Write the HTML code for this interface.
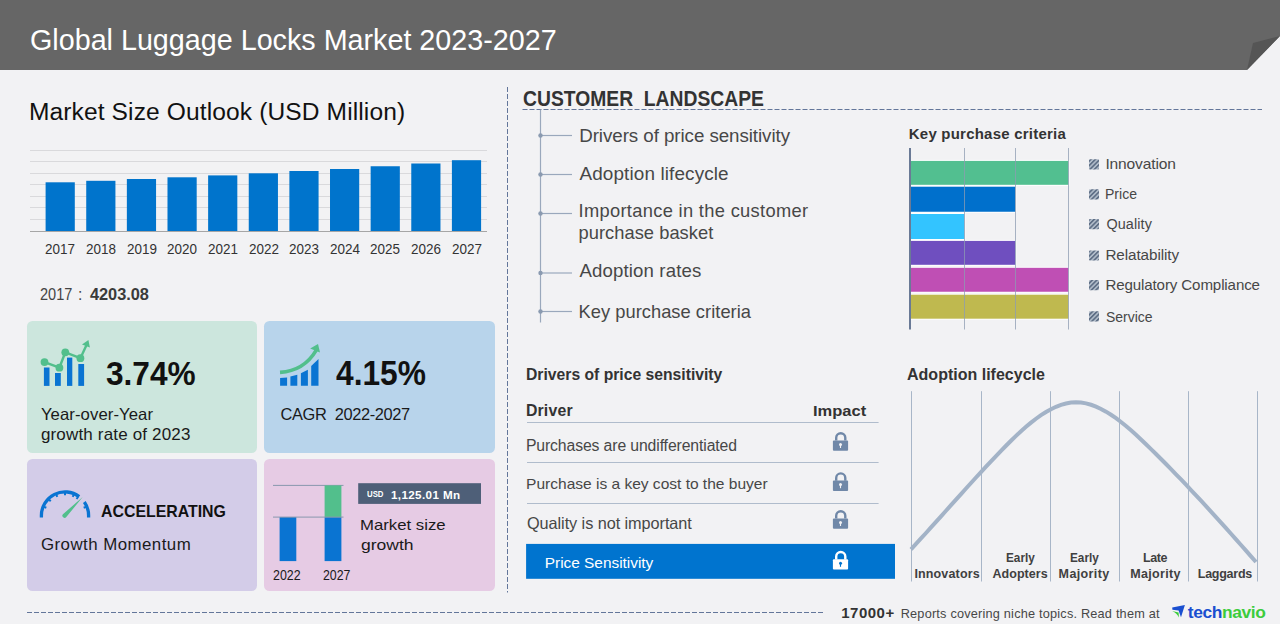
<!DOCTYPE html>
<html><head><meta charset="utf-8">
<style>
*{margin:0;padding:0;box-sizing:border-box}
html,body{width:1280px;height:624px;overflow:hidden;background:#f2f2f4;font-family:"Liberation Sans",sans-serif;color:#404040}
.a{position:absolute;white-space:nowrap;line-height:1}
svg.s{position:absolute;left:0;top:0}
.card{position:absolute;border-radius:6px}
</style></head><body>
<svg class="s" width="1280" height="624" viewBox="0 0 1280 624">
<polygon points="0,0 1280,0 1280,36 1247,70 0,70" fill="#666666"/>
<polygon points="1247,70 1253,43 1280,36" fill="#555555"/>
<g stroke="#d9d9dc" stroke-width="1"><line x1="30" x2="487" y1="150.5" y2="150.5"/><line x1="30" x2="487" y1="161.5" y2="161.5"/><line x1="30" x2="487" y1="173.5" y2="173.5"/><line x1="30" x2="487" y1="184.5" y2="184.5"/><line x1="30" x2="487" y1="196.5" y2="196.5"/><line x1="30" x2="487" y1="207.5" y2="207.5"/><line x1="30" x2="487" y1="219.5" y2="219.5"/></g>
<line x1="30" x2="487" y1="231.5" y2="231.5" stroke="#a6a6a6"/>
<g fill="#0074cc"><rect x="45.60" y="182.3" width="29.2" height="48.70"/><rect x="86.23" y="180.8" width="29.2" height="50.20"/><rect x="126.86" y="179" width="29.2" height="52.00"/><rect x="167.49" y="177.3" width="29.2" height="53.70"/><rect x="208.12" y="175.4" width="29.2" height="55.60"/><rect x="248.75" y="173.3" width="29.2" height="57.70"/><rect x="289.38" y="171" width="29.2" height="60.00"/><rect x="330.01" y="169" width="29.2" height="62.00"/><rect x="370.64" y="166.25" width="29.2" height="64.75"/><rect x="411.27" y="163.5" width="29.2" height="67.50"/><rect x="451.90" y="160.2" width="29.2" height="70.80"/></g>
<rect x="27" y="321" width="230" height="132" rx="5.5" fill="#cce6dd"/>
<rect x="264" y="321" width="231" height="132" rx="5.5" fill="#b8d4eb"/>
<rect x="27" y="459" width="230" height="132" rx="5.5" fill="#d3cce8"/>
<rect x="264" y="459" width="231" height="132" rx="5.5" fill="#e6cbe4"/>
<rect x="43.9" y="367.5" width="5.60" height="18.40" fill="#0a74d2"/>
<rect x="55" y="373" width="5.80" height="12.90" fill="#0a74d2"/>
<rect x="67" y="357.6" width="5.30" height="28.30" fill="#0a74d2"/>
<rect x="78.3" y="364" width="5.80" height="21.90" fill="#0a74d2"/>
<polyline points="44.5,362.1 59.4,367.7 65.3,352.3 80.4,358.2 86.3,345.5" stroke="#52bf8c" stroke-width="2.4" fill="none" stroke-linejoin="round"/>
<circle cx="44.5" cy="362.1" r="3.9" fill="#52bf8c"/>
<circle cx="59.4" cy="367.7" r="3.9" fill="#52bf8c"/>
<circle cx="65.3" cy="352.3" r="3.9" fill="#52bf8c"/>
<circle cx="80.4" cy="358.2" r="3.9" fill="#52bf8c"/>
<polygon points="88.4,340 89.9,347.6 82,344.6" fill="#52bf8c"/>
<polygon points="280.1,377.9 287.1,377.4 287.1,385.8 280.1,385.8" fill="#0a74d2"/>
<polygon points="290.4,376.6 297.3,374.8 297.3,385.8 290.4,385.8" fill="#0a74d2"/>
<polygon points="300.9,373.25 307.9,369.7 307.9,385.8 300.9,385.8" fill="#0a74d2"/>
<polygon points="311.2,366 318.5,358.9 318.5,385.8 311.2,385.8" fill="#0a74d2"/>
<path d="M280,372.4 Q304,371 316.3,350.2" stroke="#52bf8c" stroke-width="3.6" fill="none"/>
<polygon points="318,343.9 320,352.6 310.2,348.6" fill="#52bf8c"/>
<path d="M41.40,517.50 L41.40,515.5 A23.6,23.6 0 0 1 79.20,496.65" stroke="#0a74d2" stroke-width="3.3" fill="none"/>
<path d="M84.33,501.96 A23.6,23.6 0 0 1 88.60,515.5 L88.60,517.5" stroke="#0a74d2" stroke-width="3.3" fill="none"/>
<line x1="44.12" y1="506.85" x2="46.34" y2="507.77" stroke="#0a74d2" stroke-width="2"/>
<line x1="49.02" y1="499.52" x2="50.72" y2="501.22" stroke="#0a74d2" stroke-width="2"/>
<line x1="56.35" y1="494.62" x2="57.27" y2="496.84" stroke="#0a74d2" stroke-width="2"/>
<line x1="65.00" y1="492.90" x2="65.00" y2="495.30" stroke="#0a74d2" stroke-width="2"/>
<line x1="73.65" y1="494.62" x2="72.73" y2="496.84" stroke="#0a74d2" stroke-width="2"/>
<line x1="77.96" y1="496.99" x2="76.59" y2="498.95" stroke="#0a74d2" stroke-width="2"/>
<line x1="85.88" y1="506.85" x2="83.66" y2="507.77" stroke="#0a74d2" stroke-width="2"/>
<path d="M82.7,497.1 L66.3,517 A2,2 0 0 1 62.9,514.2 Z" fill="#52bf8c"/>
<line x1="273" x2="343.5" y1="485.4" y2="485.4" stroke="#8898ae" stroke-width="1"/>
<rect x="279.6" y="517.1" width="16.7" height="44" fill="#0a74d2"/>
<rect x="324.6" y="517.1" width="16.8" height="44" fill="#0a74d2"/>
<rect x="324.6" y="485.4" width="16.8" height="31.7" fill="#52bf8c"/>
<line x1="273" x2="343.5" y1="517.1" y2="517.1" stroke="#8898ae" stroke-width="1"/>
<rect x="358.2" y="483.2" width="122.8" height="20.7" fill="#4e5f78"/>
<g stroke="#63769a" stroke-width="1" stroke-dasharray="5,2">
<line x1="507.5" y1="87" x2="507.5" y2="592.5"/>
<line x1="522.5" y1="109.5" x2="1262" y2="109.5"/>
<line x1="27" y1="612.5" x2="823" y2="612.5"/>
</g>
<g stroke="#9aa8bc" stroke-width="1.2">
<line x1="540.5" y1="109.5" x2="540.5" y2="322.5"/>
<line x1="540.5" y1="135.5" x2="572" y2="135.5"/>
<line x1="540.5" y1="174.5" x2="572" y2="174.5"/>
<line x1="540.5" y1="213.5" x2="572" y2="213.5"/>
<line x1="540.5" y1="273" x2="572" y2="273"/>
<line x1="540.5" y1="311.5" x2="572" y2="311.5"/>
</g>
<circle cx="540.5" cy="135.5" r="2.2" fill="#8a9ab0"/>
<circle cx="540.5" cy="174.5" r="2.2" fill="#8a9ab0"/>
<circle cx="540.5" cy="213.5" r="2.2" fill="#8a9ab0"/>
<circle cx="540.5" cy="273" r="2.2" fill="#8a9ab0"/>
<circle cx="540.5" cy="311.5" r="2.2" fill="#8a9ab0"/>
<rect x="910" y="160.9" width="158.4" height="23.90" fill="#52bf90" stroke="#fff" stroke-width="2" paint-order="stroke"/>
<rect x="910" y="186.7" width="105.3" height="25.05" fill="#0070cc" stroke="#fff" stroke-width="2" paint-order="stroke"/>
<rect x="910" y="214" width="54.4" height="25.00" fill="#33c4ff" stroke="#fff" stroke-width="2" paint-order="stroke"/>
<rect x="910" y="240.9" width="105.3" height="23.90" fill="#6f4fbf" stroke="#fff" stroke-width="2" paint-order="stroke"/>
<rect x="910" y="267.8" width="158.4" height="23.95" fill="#bf4fb4" stroke="#fff" stroke-width="2" paint-order="stroke"/>
<rect x="910" y="294.7" width="158.4" height="24.00" fill="#bfb94f" stroke="#fff" stroke-width="2" paint-order="stroke"/>
<g stroke="#8d9cb2" stroke-width="1" opacity="0.75"><line x1="964.5" y1="148" x2="964.5" y2="329.5"/><line x1="1015.5" y1="148" x2="1015.5" y2="329.5"/><line x1="1068.5" y1="148" x2="1068.5" y2="329.5"/></g>
<line x1="910" y1="148" x2="910" y2="329.5" stroke="#6a7a96" stroke-width="2"/>
<defs><pattern id="hatch" width="3.2" height="3.2" patternUnits="userSpaceOnUse" patternTransform="rotate(45)"><rect width="3.2" height="3.2" fill="#b4bfcc"/><rect width="1.7" height="3.2" fill="#5f6f86"/></pattern></defs>
<rect x="1089" y="159.2" width="10" height="10.2" rx="1" fill="url(#hatch)"/>
<rect x="1089" y="189.3" width="10" height="10.2" rx="1" fill="url(#hatch)"/>
<rect x="1089" y="219" width="10" height="10.2" rx="1" fill="url(#hatch)"/>
<rect x="1089" y="250.4" width="10" height="10.2" rx="1" fill="url(#hatch)"/>
<rect x="1089" y="280" width="10" height="10.2" rx="1" fill="url(#hatch)"/>
<rect x="1089" y="311.2" width="10" height="10.2" rx="1" fill="url(#hatch)"/>
<g stroke="#b0bccc" stroke-width="1">
<line x1="527" y1="422.5" x2="878.6" y2="422.5"/>
<line x1="527" y1="462.5" x2="878.6" y2="462.5"/>
<line x1="527" y1="503.5" x2="878.6" y2="503.5"/>
</g>
<rect x="526.1" y="543.9" width="368.9" height="34.9" fill="#0074cf"/>
<g transform="translate(832.9,432.0)"><path d="M3.3,8.6 V5.75 A4.55,4.55 0 0 1 12.4,5.75 V8.6" stroke="#7088a8" stroke-width="2.4" fill="none"/><rect x="0" y="8.4" width="15.2" height="10.3" rx="1" fill="#7088a8"/><circle cx="7.6" cy="12.4" r="1.5" fill="#f2f2f4"/><rect x="7.05" y="12.4" width="1.1" height="3.6" fill="#f2f2f4"/></g>
<g transform="translate(832.9,472.2)"><path d="M3.3,8.6 V5.75 A4.55,4.55 0 0 1 12.4,5.75 V8.6" stroke="#7088a8" stroke-width="2.4" fill="none"/><rect x="0" y="8.4" width="15.2" height="10.3" rx="1" fill="#7088a8"/><circle cx="7.6" cy="12.4" r="1.5" fill="#f2f2f4"/><rect x="7.05" y="12.4" width="1.1" height="3.6" fill="#f2f2f4"/></g>
<g transform="translate(832.9,510.00000000000006)"><path d="M3.3,8.6 V5.75 A4.55,4.55 0 0 1 12.4,5.75 V8.6" stroke="#7088a8" stroke-width="2.4" fill="none"/><rect x="0" y="8.4" width="15.2" height="10.3" rx="1" fill="#7088a8"/><circle cx="7.6" cy="12.4" r="1.5" fill="#f2f2f4"/><rect x="7.05" y="12.4" width="1.1" height="3.6" fill="#f2f2f4"/></g>
<g transform="translate(832.9,550.8)"><path d="M3.3,8.6 V5.75 A4.55,4.55 0 0 1 12.4,5.75 V8.6" stroke="#ffffff" stroke-width="2.4" fill="none"/><rect x="0" y="8.4" width="15.2" height="10.3" rx="1" fill="#ffffff"/><circle cx="7.6" cy="12.4" r="1.5" fill="#0074cf"/><rect x="7.05" y="12.4" width="1.1" height="3.6" fill="#0074cf"/></g>
<g stroke="#a8b6c8" stroke-width="1"><line x1="911.5" y1="391.2" x2="911.5" y2="581.5"/><line x1="981.5" y1="391.2" x2="981.5" y2="581.5"/><line x1="1050.5" y1="391.2" x2="1050.5" y2="581.5"/><line x1="1119.5" y1="391.2" x2="1119.5" y2="581.5"/><line x1="1188.5" y1="391.2" x2="1188.5" y2="581.5"/><line x1="1257.5" y1="391.2" x2="1257.5" y2="581.5"/></g>
<polyline points="911.0,549.30 916.0,543.91 921.0,538.47 926.0,532.98 931.0,527.46 936.0,521.92 941.0,516.35 946.0,510.78 951.0,505.20 956.0,499.62 961.0,494.06 966.0,488.51 971.0,482.99 976.0,477.51 981.0,472.06 986.0,466.67 991.0,461.33 996.0,456.05 1001.0,450.85 1006.0,445.73 1011.0,440.74 1016.0,435.89 1021.0,431.23 1026.0,426.80 1031.0,422.62 1036.0,418.74 1041.0,415.18 1046.0,411.98 1051.0,409.17 1056.0,406.80 1061.0,404.88 1066.0,403.47 1071.0,402.58 1076.0,402.27 1081.0,402.54 1086.0,403.38 1091.0,404.75 1096.0,406.60 1101.0,408.92 1106.0,411.65 1111.0,414.76 1116.0,418.22 1121.0,421.99 1126.0,426.04 1131.0,430.32 1136.0,434.80 1141.0,439.44 1146.0,444.21 1151.0,449.07 1156.0,454.00 1161.0,458.98 1166.0,464.03 1171.0,469.12 1176.0,474.27 1181.0,479.47 1186.0,484.72 1191.0,490.01 1196.0,495.35 1201.0,500.72 1206.0,506.14 1211.0,511.60 1216.0,517.09 1221.0,522.61 1226.0,528.17 1231.0,533.75 1236.0,539.36 1241.0,545.00 1246.0,550.65 1251.0,556.33 1256.0,562.03" stroke="#a3b3c7" stroke-width="4" fill="none"/>
<polygon points="1172.2,607.6 1184.9,605 1181,617.3 1178.6,610.6 1172.4,609.8" fill="#1a4fd0"/>
<path d="M1172.2,611 L1178.6,612.4 L1178.9,617.6 Q1177,613.3 1172.2,611 Z" fill="#3ccc3c"/>
</svg>
<div class="a" style="left:1187.8px;top:603.9px;font-size:17.4px;font-weight:bold;color:#1a4fd0;letter-spacing:-0.4px">tech<span style="color:#3ccc3c">navio</span></div>
<div class="a t" style="left:29.53px;top:25.20px;font-size:29.65px;color:#fff;transform:scaleX(0.9684);transform-origin:0 0">Global Luggage Locks Market 2023-2027</div>
<div class="a t" style="left:28.90px;top:100.01px;font-size:24.56px;color:#111;letter-spacing:0.121px">Market Size Outlook (USD Million)</div>
<div class="a t" style="left:45.35px;top:242.01px;font-size:14.83px;color:#333;transform:scaleX(0.9079);transform-origin:0 0">2017</div>
<div class="a t" style="left:85.98px;top:242.01px;font-size:14.83px;color:#333;transform:scaleX(0.9079);transform-origin:0 0">2018</div>
<div class="a t" style="left:126.61px;top:242.01px;font-size:14.83px;color:#333;transform:scaleX(0.9079);transform-origin:0 0">2019</div>
<div class="a t" style="left:167.24px;top:242.01px;font-size:14.83px;color:#333;transform:scaleX(0.9079);transform-origin:0 0">2020</div>
<div class="a t" style="left:207.87px;top:242.01px;font-size:14.83px;color:#333;transform:scaleX(0.9079);transform-origin:0 0">2021</div>
<div class="a t" style="left:248.50px;top:242.01px;font-size:14.83px;color:#333;transform:scaleX(0.9079);transform-origin:0 0">2022</div>
<div class="a t" style="left:289.13px;top:242.01px;font-size:14.83px;color:#333;transform:scaleX(0.9079);transform-origin:0 0">2023</div>
<div class="a t" style="left:329.76px;top:242.01px;font-size:14.83px;color:#333;transform:scaleX(0.9079);transform-origin:0 0">2024</div>
<div class="a t" style="left:370.39px;top:242.01px;font-size:14.83px;color:#333;transform:scaleX(0.9079);transform-origin:0 0">2025</div>
<div class="a t" style="left:411.02px;top:242.01px;font-size:14.83px;color:#333;transform:scaleX(0.9079);transform-origin:0 0">2026</div>
<div class="a t" style="left:451.65px;top:242.01px;font-size:14.83px;color:#333;transform:scaleX(0.9079);transform-origin:0 0">2027</div>
<div class="a t" style="left:40.25px;top:286.01px;font-size:16.35px;color:#444;transform:scaleX(0.8892);transform-origin:0 0">2017</div>
<div class="a t" style="left:78.00px;top:287.01px;font-size:15.60px;color:#444">:</div>
<div class="a t" style="left:90.00px;top:286.01px;font-size:16.35px;color:#3a3a3a;font-weight:bold;letter-spacing:-0.031px">4203.08</div>
<div class="a t" style="left:522.50px;top:88.81px;font-size:21.37px;color:#333;font-weight:bold;transform:scaleX(0.9036);transform-origin:0 0">CUSTOMER  LANDSCAPE</div>
<div class="a t" style="left:579.20px;top:126.90px;font-size:18.75px;color:#474747;letter-spacing:-0.062px">Drivers of price sensitivity</div>
<div class="a t" style="left:579.50px;top:164.81px;font-size:18.90px;color:#474747;letter-spacing:0.124px">Adoption lifecycle</div>
<div class="a t" style="left:578.50px;top:202.01px;font-size:18.31px;color:#474747;letter-spacing:0.316px">Importance in the customer</div>
<div class="a t" style="left:578.50px;top:224.32px;font-size:18.31px;color:#474747;letter-spacing:0.037px">purchase basket</div>
<div class="a t" style="left:579.50px;top:261.90px;font-size:18.60px;color:#474747;letter-spacing:0.145px">Adoption rates</div>
<div class="a t" style="left:578.50px;top:303.41px;font-size:18.31px;color:#474747;letter-spacing:0.031px">Key purchase criteria</div>
<div class="a t" style="left:908.80px;top:127.40px;font-size:14.97px;color:#333;font-weight:bold;letter-spacing:0.233px">Key purchase criteria</div>
<div class="a t" style="left:1105.40px;top:155.91px;font-size:15.55px;color:#474747;letter-spacing:-0.133px">Innovation</div>
<div class="a t" style="left:1105.47px;top:185.71px;font-size:15.12px;color:#474747;transform:scaleX(0.9297);transform-origin:0 0">Price</div>
<div class="a t" style="left:1106.40px;top:217.41px;font-size:14.39px;color:#474747;letter-spacing:0.125px">Quality</div>
<div class="a t" style="left:1105.40px;top:246.71px;font-size:15.26px;color:#474747;letter-spacing:-0.079px">Relatability</div>
<div class="a t" style="left:1105.40px;top:276.71px;font-size:15.12px;color:#474747;letter-spacing:-0.122px">Regulatory Compliance</div>
<div class="a t" style="left:1106.40px;top:308.60px;font-size:15.41px;color:#474747;transform:scaleX(0.9062);transform-origin:0 0">Service</div>
<div class="a t" style="left:525.98px;top:366.31px;font-size:17.01px;color:#333;font-weight:bold;transform:scaleX(0.9235);transform-origin:0 0">Drivers of price sensitivity</div>
<div class="a t" style="left:525.90px;top:402.91px;font-size:15.84px;color:#333;font-weight:bold;letter-spacing:0.181px">Driver</div>
<div class="a t" style="left:813.03px;top:402.90px;font-size:15.41px;color:#333;font-weight:bold;transform:scaleX(1.0705);transform-origin:0 0">Impact</div>
<div class="a t" style="left:525.90px;top:437.76px;font-size:15.77px;color:#474747;letter-spacing:-0.116px">Purchases are undifferentiated</div>
<div class="a t" style="left:526.10px;top:476.00px;font-size:15.55px;color:#474747;letter-spacing:-0.014px">Purchase is a key cost to the buyer</div>
<div class="a t" style="left:527.00px;top:515.11px;font-size:16.28px;color:#474747;letter-spacing:-0.066px">Quality is not important</div>
<div class="a t" style="left:544.80px;top:554.71px;font-size:15.41px;color:#fff;letter-spacing:-0.014px">Price Sensitivity</div>
<div class="a t" style="left:906.80px;top:366.31px;font-size:17.01px;color:#333;font-weight:bold;transform:scaleX(0.9421);transform-origin:0 0">Adoption lifecycle</div>
<div class="a t" style="left:914.40px;top:567.80px;font-size:12.50px;color:#404040;font-weight:bold;letter-spacing:0.150px">Innovators</div>
<div class="a t" style="left:1005.90px;top:551.91px;font-size:12.50px;color:#404040;font-weight:bold;transform:scaleX(0.9404);transform-origin:0 0">Early</div>
<div class="a t" style="left:992.50px;top:567.80px;font-size:12.50px;color:#404040;font-weight:bold;letter-spacing:0.041px">Adopters</div>
<div class="a t" style="left:1069.80px;top:551.91px;font-size:12.50px;color:#404040;font-weight:bold;transform:scaleX(0.9404);transform-origin:0 0">Early</div>
<div class="a t" style="left:1058.60px;top:567.80px;font-size:12.50px;color:#404040;font-weight:bold;letter-spacing:0.375px">Majority</div>
<div class="a t" style="left:1142.90px;top:551.91px;font-size:12.50px;color:#404040;font-weight:bold;letter-spacing:-0.383px">Late</div>
<div class="a t" style="left:1130.20px;top:567.80px;font-size:12.50px;color:#404040;font-weight:bold;letter-spacing:0.347px">Majority</div>
<div class="a t" style="left:1197.80px;top:567.80px;font-size:12.50px;color:#404040;font-weight:bold;letter-spacing:-0.259px">Laggards</div>
<div class="a t" style="left:105.70px;top:357.11px;font-size:33.58px;color:#111;font-weight:bold;transform:scaleX(0.9415);transform-origin:0 0">3.74%</div>
<div class="a t" style="left:40.90px;top:406.71px;font-size:16.72px;color:#1a1a1a;letter-spacing:0.081px">Year-over-Year</div>
<div class="a t" style="left:40.90px;top:425.60px;font-size:17.01px;color:#1a1a1a;letter-spacing:0.171px">growth rate of 2023</div>
<div class="a t" style="left:335.50px;top:356.21px;font-size:34.16px;color:#111;font-weight:bold;transform:scaleX(0.9290);transform-origin:0 0">4.15%</div>
<div class="a t" style="left:280.60px;top:405.71px;font-size:16.42px;color:#1a1a1a;letter-spacing:-0.382px">CAGR  2022-2027</div>
<div class="a t" style="left:100.60px;top:502.91px;font-size:17.01px;color:#111;font-weight:bold;transform:scaleX(0.9336);transform-origin:0 0">ACCELERATING</div>
<div class="a t" style="left:40.90px;top:537.01px;font-size:16.86px;color:#1a1a1a;letter-spacing:0.464px">Growth Momentum</div>
<div class="a t" style="left:272.70px;top:567.81px;font-size:14.39px;color:#1a1a1a;transform:scaleX(0.8629);transform-origin:0 0">2022</div>
<div class="a t" style="left:322.70px;top:567.81px;font-size:14.39px;color:#1a1a1a;transform:scaleX(0.8598);transform-origin:0 0">2027</div>
<div class="a t" style="left:367.40px;top:488.81px;font-size:9.52px;color:#fff;font-weight:bold;transform:scaleX(0.8210);transform-origin:0 0">USD</div>
<div class="a t" style="left:390.90px;top:489.11px;font-size:11.63px;color:#fff;font-weight:bold;letter-spacing:0.401px">1,125.01 Mn</div>
<div class="a t" style="left:359.79px;top:516.71px;font-size:15.12px;color:#1a1a1a;transform:scaleX(1.1089);transform-origin:0 0">Market size</div>
<div class="a t" style="left:360.90px;top:536.61px;font-size:15.12px;color:#1a1a1a;transform:scaleX(1.1591);transform-origin:0 0">growth</div>
<div class="a t" style="left:841.30px;top:605.90px;font-size:14.97px;color:#333;font-weight:bold;letter-spacing:0.495px">17000+</div>
<div class="a t" style="left:900.70px;top:608.01px;font-size:12.72px;color:#474747;letter-spacing:0.204px">Reports covering niche topics. Read them at</div>
</body></html>
